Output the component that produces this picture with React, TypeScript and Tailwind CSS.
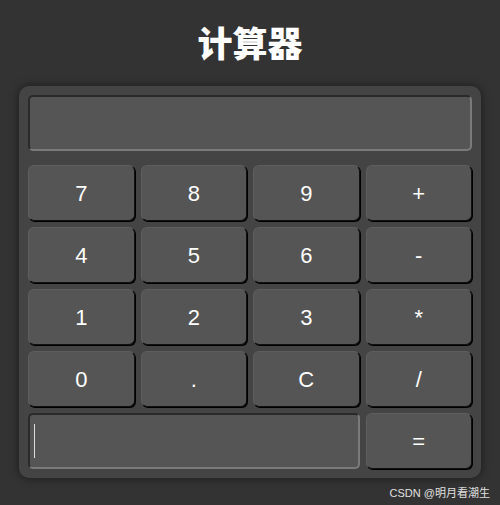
import React, { useState } from 'react';

const keys = ['7', '8', '9', '+', '4', '5', '6', '-', '1', '2', '3', '*', '0', '.', 'C', '/'];

export default function App() {
  const [value, setValue] = useState('');

  const press = (k: string) => {
    if (k === 'C') setValue('');
    else setValue((v) => v + k);
  };

  return (
    <div className="min-h-[505px] w-full bg-[#333333] font-['Liberation_Sans','Noto_Sans_CJK_SC',sans-serif] text-white relative">
      <h1 className="pt-[20px] text-center text-[35px] font-black leading-[44px] font-['Noto_Sans_CJK_SC',sans-serif]">
        计算器
      </h1>

      {/* Calculator body */}
      <div className="mx-[19px] mt-[22px] rounded-[10px] bg-[#444444] p-[9px] shadow-[0_0_10px_rgba(0,0,0,0.5)]">
        <input
          readOnly
          value={value}
          className="mb-[14px] block h-[56px] w-full rounded-[5px] border-2 border-t-[#2a2a2a] border-l-[#2a2a2a] border-b-[#7a7a7a] border-r-[#7a7a7a] bg-[#555555] px-2 text-right text-2xl outline-none"
        />
        <div className="grid grid-cols-4 gap-[6px]">
          {keys.map((k) => (
            <button
              key={k}
              onClick={() => press(k)}
              className="h-[56px] rounded-[6px] border border-t-[#5e5e5e] border-l-[#5e5e5e] border-b-[#111] border-r-[#111] bg-[#555555] text-[22px] text-white shadow-[1px_1px_0_#000]"
            >
              {k}
            </button>
          ))}
          <div className="col-span-3 flex h-[56px] items-center rounded-[5px] border-2 border-t-[#2a2a2a] border-l-[#2a2a2a] border-b-[#7a7a7a] border-r-[#7a7a7a] bg-[#555555] pl-[4px]">
            <span className="h-[34px] w-px bg-[#dddddd]" />
          </div>
          <button
            onClick={() => press('=')}
            className="h-[56px] rounded-[6px] border border-t-[#5e5e5e] border-l-[#5e5e5e] border-b-[#111] border-r-[#111] bg-[#555555] text-[22px] text-white shadow-[1px_1px_0_#000]"
          >
            =
          </button>
        </div>
      </div>

      <div className="absolute bottom-[4px] right-[10px] text-[11px] text-[#e0e0e0]">
        CSDN @明月看潮生
      </div>
    </div>
  );
}
